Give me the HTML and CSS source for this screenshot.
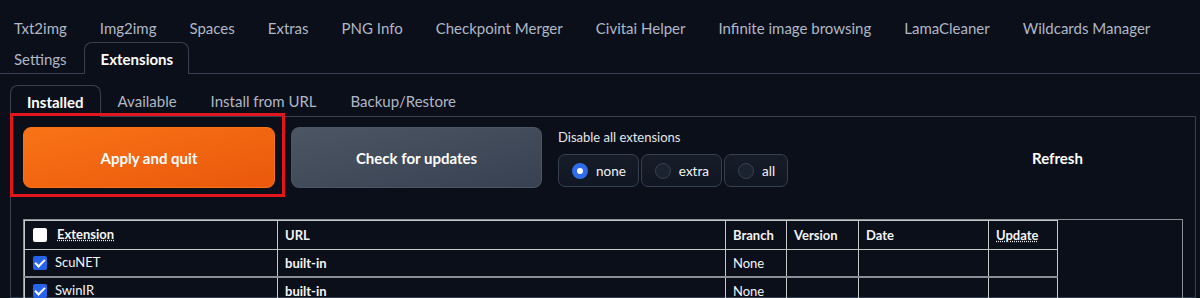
FILE: index.html
```html
<!DOCTYPE html>
<html lang="en">
<head>
  <meta charset="UTF-8" />
  <title>Extensions</title>
  <link rel="stylesheet" href="styles.css">
</head>
<body>

  <nav class="main-tabs">
    <button class="tab">Txt2img</button>
    <button class="tab">Img2img</button>
    <button class="tab">Spaces</button>
    <button class="tab">Extras</button>
    <button class="tab">PNG Info</button>
    <button class="tab">Checkpoint Merger</button>
    <button class="tab">Civitai Helper</button>
    <button class="tab">Infinite image browsing</button>
    <button class="tab">LamaCleaner</button>
    <button class="tab">Wildcards Manager</button>
    <button class="tab">Settings</button>
    <button class="tab selected">Extensions</button>
  </nav>

  <div class="ext-area">
    <nav class="sub-tabs">
      <button class="sub-tab selected">Installed</button>
      <button class="sub-tab">Available</button>
      <button class="sub-tab">Install from URL</button>
      <button class="sub-tab">Backup/Restore</button>
    </nav>

    <section class="panel">
      <div class="actions">
        <div class="highlight">
          <button class="btn primary">Apply and quit</button>
        </div>
        <button class="btn secondary">Check for updates</button>
        <div class="disable-group">
          <span class="group-label">Disable all extensions</span>
          <div class="radios">
            <label class="radio checked"><span class="dot"></span>none</label>
            <label class="radio"><span class="dot"></span>extra</label>
            <label class="radio"><span class="dot"></span>all</label>
          </div>
        </div>
        <button class="btn plain">Refresh</button>
      </div>

      <div class="table-wrap">
        <table>
          <thead>
            <tr>
              <th class="c-ext"><span class="box"></span><abbr>Extension</abbr></th>
              <th class="c-url">URL</th>
              <th class="c-branch">Branch</th>
              <th class="c-ver">Version</th>
              <th class="c-date">Date</th>
              <th class="c-upd"><abbr>Update</abbr></th>
            </tr>
          </thead>
          <tbody>
            <tr>
              <td><span class="box on"></span>ScuNET</td>
              <td class="url">built-in</td>
              <td>None</td>
              <td></td>
              <td></td>
              <td></td>
            </tr>
            <tr>
              <td><span class="box on"></span>SwinIR</td>
              <td class="url">built-in</td>
              <td>None</td>
              <td></td>
              <td></td>
              <td></td>
            </tr>
          </tbody>
        </table>
      </div>
    </section>
  </div>

</body>
</html>
```

FILE: styles.css
```css
body {
  margin: 0;
  background: #0b0f19;
  font-family: Lato, "Liberation Sans", sans-serif;
  color: #f3f4f6;
  overflow: hidden;
}
button {
  font-family: inherit;
  cursor: pointer;
}
/* top tabs */
.main-tabs {
  display: flex;
  flex-wrap: wrap;
  padding: 11px 0 0 0;
  border-bottom: 1px solid #374151;
}
.tab {
  height: 31px;
  padding: 1px 13px 0 13px;
  margin-right: 5px;
  background: none;
  border: 1px solid transparent;
  border-bottom: none;
  color: #b0b8c6;
  font-size: 15px;
}
.tab.selected {
  color: #fff;
  font-weight: 700;
  border-color: #374151;
  border-radius: 8px 8px 0 0;
  background: #0b0f19;
  margin-bottom: -1px;
  height: 32px;
  margin-left: -2px;
  padding: 1px 15px 0 16px;
}
/* extension page */
.ext-area {
  margin: 11px 4px 0 10px;
}
.sub-tabs {
  display: flex;
  border-bottom: 1px solid #374151;
}
.sub-tab {
  height: 31px;
  padding: 0 16px;
  background: none;
  border: 1px solid transparent;
  border-bottom: none;
  color: #b0b8c6;
  font-size: 15px;
}
.sub-tab.selected {
  color: #fff;
  font-weight: 700;
  border-color: #374151;
  border-radius: 8px 8px 0 0;
  background: #0b0f19;
  margin-bottom: -1px;
  height: 32px;
}
.panel {
  border: 1px solid #374151;
  border-top: none;
  padding: 10px 12px 0 12px;
  height: 170px;
}
.actions {
  display: grid;
  grid-template-columns: 252px 251px 1fr 251px;
  gap: 16px;
  height: 61px;
}
.btn {
  height: 61px;
  border-radius: 8px;
  font-size: 15px;
  font-weight: 700;
  color: #fff;
}
.highlight {
  position: relative;
}
/* red marker drawn over the button */
.highlight::after {
  content: "";
  position: absolute;
  left: -13px;
  right: -10px;
  top: -14px;
  bottom: -9px;
  border: 3px solid #e3161d;
}
.primary {
  width: 100%;
  border: 1px solid #f97316;
  background: linear-gradient(to bottom right, #f97316, #ea580c);
}
.secondary {
  border: 1px solid #4b5563;
  background: linear-gradient(to bottom right, #4b5563, #374151);
}
.plain {
  background: none;
  border: none;
}
.disable-group {
  display: flex;
  flex-direction: column;
}
.group-label {
  font-size: 13px;
  color: #e5e7eb;
  margin: 2px 0 9px 0;
}
.radios {
  display: flex;
  gap: 2px;
}
.radio {
  display: flex;
  align-items: center;
  gap: 8px;
  height: 31px;
  padding: 0 12px 0 13px;
  border: 1px solid #374151;
  border-radius: 7px;
  background: linear-gradient(#161c28, #111722);
  font-size: 13.5px;
}
.dot {
  width: 14px;
  height: 14px;
  border-radius: 50%;
  border: 1px solid #374151;
  background: #1b2230;
  box-sizing: content-box;
}
.radio.checked .dot {
  background: #fff;
  border: 5px solid #2f6de8;
  width: 6px;
  height: 6px;
}
/* installed extensions table */
.table-wrap {
  margin-top: 31px;
  border: 1px solid #8b8f96;
  border-bottom: none;
  height: 80px;
}
table {
  border-collapse: collapse;
  font-size: 13px;
  border: 1px solid #c8c8c8;
}
th, td {
  border: 1px solid #c8c8c8;
  text-align: left;
  padding: 0 7px;
  height: 26px;
  white-space: nowrap;
}
th {
  height: 28px;
  font-weight: 700;
}
tbody tr + tr td {
  border-top: 2px solid #8b8f96;
}
.c-ext { width: 238px; }
.c-url { width: 433px; }
.c-branch { width: 46px; }
.c-ver { width: 57px; }
.c-date { width: 115px; }
.c-upd { width: 54px; }
.url {
  font-weight: 700;
}
abbr {
  text-decoration: underline dotted;
}
.box {
  display: inline-block;
  vertical-align: middle;
  width: 14px;
  height: 14px;
  border-radius: 2px;
  background: #fff;
  margin: 0 10px 2px 1px;
  position: relative;
}
.box.on {
  background: #2563eb;
  margin-right: 8px;
}
.box.on::after {
  content: "";
  position: absolute;
  left: 4px;
  top: 1px;
  width: 4px;
  height: 8px;
  border: solid #fff;
  border-width: 0 2px 2px 0;
  transform: rotate(45deg);
}
```
